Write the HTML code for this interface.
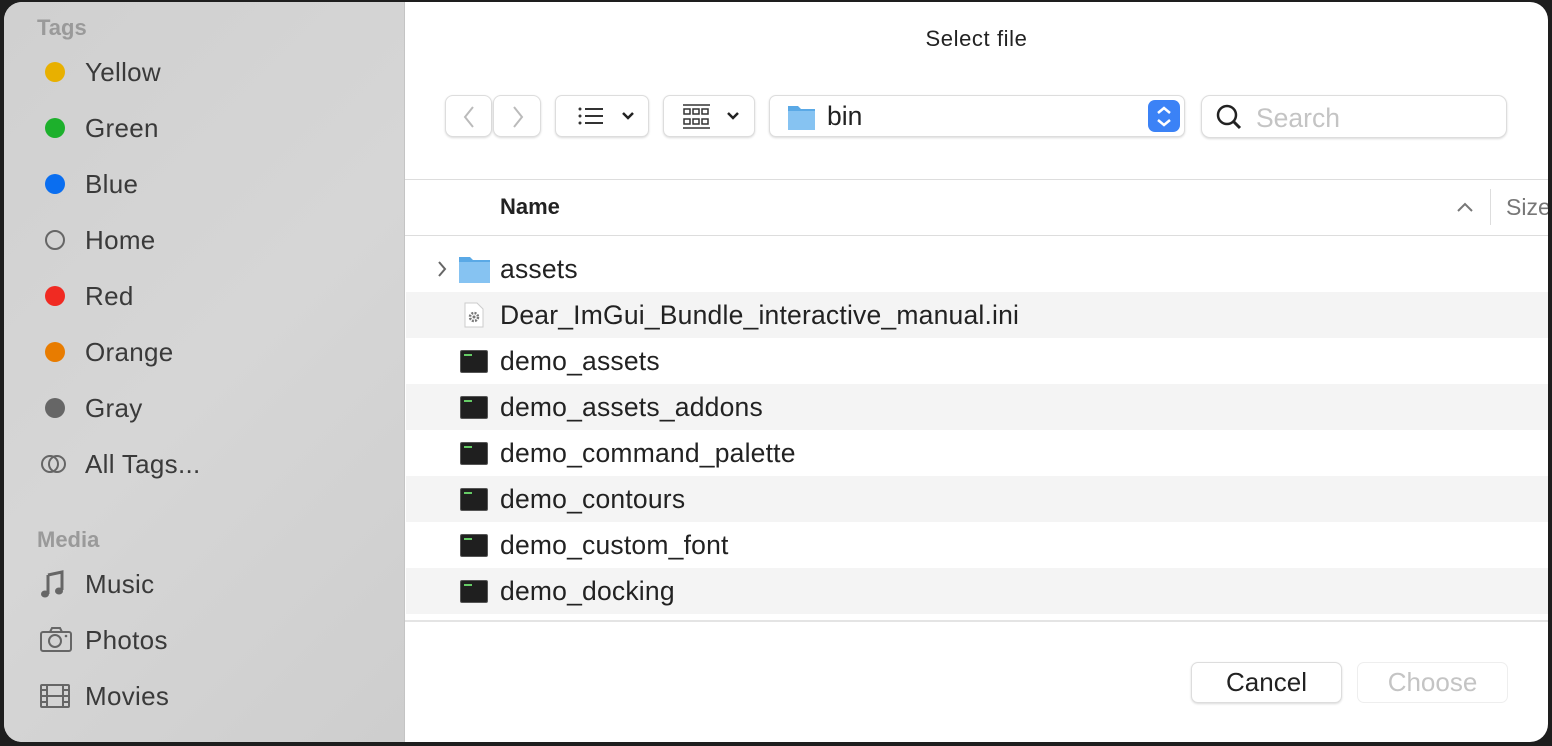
<!DOCTYPE html>
<html><head><meta charset="utf-8"><style>
*{margin:0;padding:0;box-sizing:border-box}
body{width:1552px;height:746px;background:#1e1e1e;font-family:"Liberation Sans",Arial,sans-serif;position:relative;overflow:hidden}
.win{position:absolute;left:4px;top:2px;width:1544px;height:740px;border-radius:18px;overflow:hidden;background:#fff}
.side{position:absolute;left:0;top:0;width:401px;height:740px;background:linear-gradient(135deg,#d0d0d0,#d6d6d6 50%,#cecece);border-right:1px solid #c4c4c4}
.sh{position:absolute;left:33px;font-size:22px;font-weight:bold;color:#9a9a9a}
.si{position:absolute;left:36px;height:30px;display:flex;align-items:center;font-size:26px;color:#3a3a3a;letter-spacing:.3px}
.si .ic{width:45px;flex:none;display:flex;align-items:center}
.dot{width:20px;height:20px;border-radius:50%;margin-left:5px}
.btn{position:absolute;background:#fff;border:1px solid #ddd;border-radius:7px;box-shadow:0 1px 2px rgba(0,0,0,.15)}
.row{position:absolute;left:402px;width:1142px;height:46px}
.row.g{background:#f4f4f4}
.row span{position:absolute;left:94px;top:8px;font-size:26.5px;color:#222;letter-spacing:.2px}
.term{position:absolute;left:54px;top:12px;width:28px;height:23px;background:#1f1f1f;border:1px solid #555;border-radius:2px}
.term:after{content:"";position:absolute;left:3px;top:3px;width:8px;height:2px;background:#6c6}
</style></head><body>
<div class="win">
<div class="side">
<div class="sh" style="top:13px">Tags</div>
<div class="si" style="top:55px"><div class="ic"><div class="dot" style="background:#e8b000"></div></div>Yellow</div>
<div class="si" style="top:111px"><div class="ic"><div class="dot" style="background:#1db02c"></div></div>Green</div>
<div class="si" style="top:167px"><div class="ic"><div class="dot" style="background:#0a6ef0"></div></div>Blue</div>
<div class="si" style="top:223px"><div class="ic"><div class="dot" style="border:2px solid #666"></div></div>Home</div>
<div class="si" style="top:279px"><div class="ic"><div class="dot" style="background:#f02a22"></div></div>Red</div>
<div class="si" style="top:335px"><div class="ic"><div class="dot" style="background:#e87c00"></div></div>Orange</div>
<div class="si" style="top:391px"><div class="ic"><div class="dot" style="background:#666"></div></div>Gray</div>
<div class="si" style="top:447px"><div class="ic"><svg width="28" height="22" viewBox="0 0 28 22"><circle cx="10" cy="11" r="8" fill="none" stroke="#666" stroke-width="2"/><circle cx="17" cy="11" r="8" fill="none" stroke="#666" stroke-width="2"/></svg></div>All Tags...</div>
<div class="sh" style="top:525px">Media</div>
<div class="si" style="top:567px"><div class="ic"><svg width="26" height="28" viewBox="0 0 26 28"><path d="M8 5L22 2V20" stroke="#666" stroke-width="3" fill="none"/><path d="M8 5V24" stroke="#666" stroke-width="3"/><ellipse cx="5" cy="24" rx="4" ry="3.5" fill="#666"/><ellipse cx="19" cy="21" rx="4" ry="3.5" fill="#666"/></svg></div>Music</div>
<div class="si" style="top:623px"><div class="ic"><svg width="32" height="26" viewBox="0 0 32 26"><rect x="1" y="5" width="30" height="19" rx="2" fill="none" stroke="#666" stroke-width="2"/><path d="M10 5l2-4h8l2 4" fill="none" stroke="#666" stroke-width="2"/><circle cx="15" cy="14" r="6" fill="none" stroke="#666" stroke-width="2"/><circle cx="26" cy="9" r="1.3" fill="#666"/></svg></div>Photos</div>
<div class="si" style="top:679px"><div class="ic"><svg width="30" height="24" viewBox="0 0 30 24"><rect x="1" y="1" width="28" height="22" rx="1" fill="none" stroke="#666" stroke-width="2"/><path d="M7 1V23M23 1V23M7 12H23M1 6H7M1 12H7M1 18H7M23 6H29M23 12H29M23 18H29" stroke="#666" stroke-width="2"/></svg></div>Movies</div>
</div>
<div style="position:absolute;left:401px;right:0;top:24px;text-align:center;font-size:22px;letter-spacing:.6px;color:#222">Select file</div>
<div class="btn" style="left:441px;top:93px;width:47px;height:42px;border-radius:8px"><svg width="47" height="42"><path d="M27 11L19 21L27 31" stroke="#bbb" stroke-width="2" fill="none"/></svg></div>
<div class="btn" style="left:489px;top:93px;width:48px;height:42px;border-radius:8px"><svg width="47" height="42"><path d="M20 11L28 21L20 31" stroke="#bbb" stroke-width="2" fill="none"/></svg></div>
<div class="btn" style="left:551px;top:93px;width:94px;height:42px"><svg width="94" height="42"><g fill="#333"><circle cx="24" cy="13" r="1.5"/><circle cx="24" cy="20" r="1.5"/><circle cx="24" cy="27" r="1.5"/><rect x="29" y="12" width="18" height="2"/><rect x="29" y="19" width="18" height="2"/><rect x="29" y="26" width="18" height="2"/></g><path d="M67 17L72 22L77 17" stroke="#222" stroke-width="2.5" fill="none"/></svg></div>
<div class="btn" style="left:659px;top:93px;width:92px;height:42px"><svg width="92" height="42"><g stroke="#333" stroke-width="1.5" fill="none"><path d="M19 9H46M19 32H46"/><rect x="20" y="13" width="6" height="5"/><rect x="29" y="13" width="6" height="5"/><rect x="38" y="13" width="6" height="5"/><rect x="20" y="23" width="6" height="5"/><rect x="29" y="23" width="6" height="5"/><rect x="38" y="23" width="6" height="5"/></g><path d="M64 17L69 22L74 17" stroke="#222" stroke-width="2.5" fill="none"/></svg></div>
<div class="btn" style="left:765px;top:93px;width:416px;height:42px"><svg width="416" height="42" style="position:absolute;left:0;top:0"><path d="M18 10h10l3 3h14v21H18z" fill="#5aa9e6"/><rect x="18" y="15" width="27" height="19" fill="#86c3f2"/><rect x="378" y="4" width="32" height="32" rx="7" fill="#3b82f6"/><path d="M388 17l6-5 6 5M388 24l6 5 6-5" stroke="#fff" stroke-width="2.5" fill="none"/></svg><span style="position:absolute;left:57px;top:5px;font-size:26.5px;color:#222">bin</span></div>
<div class="btn" style="left:1197px;top:93px;width:306px;height:43px;border-radius:9px"><svg width="40" height="42" style="position:absolute;left:8px;top:0"><circle cx="17" cy="19" r="9" stroke="#222" stroke-width="2.5" fill="none"/><path d="M23.5 25.5L30 32" stroke="#222" stroke-width="3"/></svg><span style="position:absolute;left:54px;top:7px;font-size:26.5px;color:#c4c4c4">Search</span></div>
<div style="position:absolute;left:401px;right:0;top:177px;height:1px;background:#ddd"></div>
<div style="position:absolute;left:401px;right:0;top:233px;height:1px;background:#ddd"></div>
<div style="position:absolute;left:496px;top:192px;font-size:22px;font-weight:bold;color:#222">Name</div>
<svg style="position:absolute;left:1452px;top:198px" width="18" height="14"><path d="M2 11L9 4L16 11" stroke="#777" stroke-width="2" fill="none"/></svg>
<div style="position:absolute;left:1486px;top:187px;width:1px;height:36px;background:#ddd"></div>
<div style="position:absolute;left:1502px;top:192px;font-size:23px;color:#777">Size</div>
<div class="row" style="top:244px"><svg style="position:absolute;left:30px;top:14px" width="12" height="18"><path d="M3 2L9 9L3 16" stroke="#666" stroke-width="2" fill="none"/></svg><svg style="position:absolute;left:53px;top:11px" width="32" height="26"><path d="M0 0h11l3 3h17v23H0z" fill="#5aa9e6"/><rect x="0" y="5" width="31" height="21" fill="#86c3f2"/></svg><span>assets</span></div>
<div class="row g" style="top:290px"><svg style="position:absolute;left:58px;top:10px" width="20" height="26"><path d="M1 1h12l6 6v18H1z" fill="#fff" stroke="#ccc"/><circle cx="10" cy="15" r="4" fill="none" stroke="#777" stroke-width="2.5" stroke-dasharray="2 1.2"/><circle cx="10" cy="15" r="1.5" fill="#777"/></svg><span>Dear_ImGui_Bundle_interactive_manual.ini</span></div>
<div class="row" style="top:336px"><div class="term"></div><span>demo_assets</span></div>
<div class="row g" style="top:382px"><div class="term"></div><span>demo_assets_addons</span></div>
<div class="row" style="top:428px"><div class="term"></div><span>demo_command_palette</span></div>
<div class="row g" style="top:474px"><div class="term"></div><span>demo_contours</span></div>
<div class="row" style="top:520px"><div class="term"></div><span>demo_custom_font</span></div>
<div class="row g" style="top:566px"><div class="term"></div><span>demo_docking</span></div>
<div style="position:absolute;left:401px;right:0;top:618px;height:2px;background:#e4e4e4"></div>
<div class="btn" style="left:1187px;top:660px;width:151px;height:41px;text-align:center;font-size:26px;line-height:39px;color:#222">Cancel</div>
<div class="btn" style="left:1353px;top:660px;width:151px;height:41px;text-align:center;font-size:26px;line-height:39px;color:#c4c4c4;box-shadow:none;border-color:#eee">Choose</div>
</div>
</body></html>
